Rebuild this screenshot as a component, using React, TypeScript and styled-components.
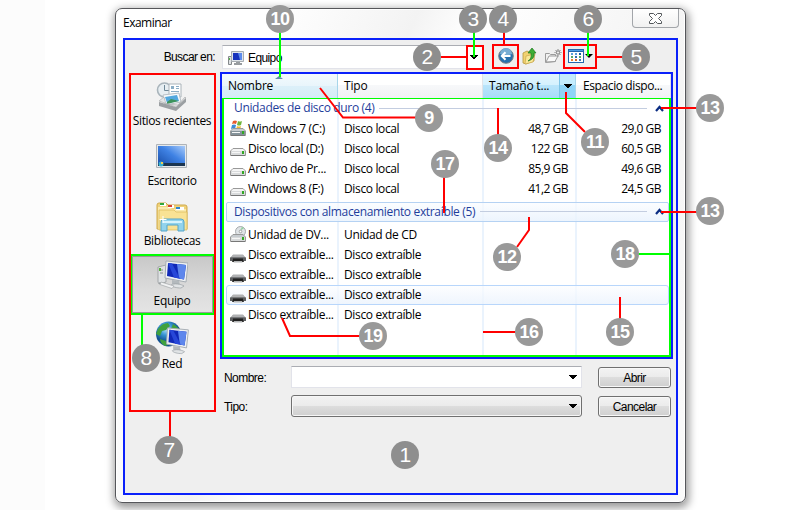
import React from "react";
import styled, { createGlobalStyle, css } from "styled-components";

const ui = '"Open Sans", "Noto Sans", sans-serif';
const classic = '"Liberation Sans", Arial, sans-serif';

const GlobalStyle = createGlobalStyle`
  * { box-sizing: border-box; }
  body { margin: 0; background: #fff; overflow: hidden; }
`;

const Page = styled.main`
  position: relative;
  width: 795px;
  height: 510px;
  padding: 8px 0 0 115px;
  overflow: hidden;
  background: linear-gradient(90deg, #fcfcfc 45px, #fff 45px);
  color: #000;
  font: 12px/20px ${ui};
  letter-spacing: -0.36px;
  white-space: nowrap;
`;

const Dialog = styled.section`
  display: flex;
  flex-direction: column;
  width: 571px;
  height: 495px;
  padding: 0 7px 7px;
  border: 1px solid #55565a;
  border-radius: 7px;
  background: linear-gradient(115deg, #fff 0 20%, #f3f3f3 38%, #fff 46%, #f4f4f4 70%, #fafafa);
  box-shadow: 1px 3px 8px 2px rgba(0, 0, 0, 0.4), inset 0 0 0 1px #fff;
`;

const TitleBar = styled.header`
  display: flex;
  flex: 0 0 29px;
  justify-content: space-between;
  line-height: 28px;
  letter-spacing: -0.5px;
`;

const CloseButton = styled.button`
  display: grid;
  place-items: center;
  width: 47px;
  height: 19px;
  margin-right: -1px;
  padding: 0;
  border: 1px solid #a3a6aa;
  border-top: 0;
  border-radius: 0 0 4px 4px;
  background: linear-gradient(#fff, #f1f1f1);
`;

const Body = styled.div`
  display: flex;
  flex: 1;
  flex-direction: column;
  width: 555px;
  padding: 5px 3px 0 4px;
  border: 2px solid #0a20fa;
  background: #efefef;
`;

const LookIn = styled.div`
  display: flex;
  flex: 0 0 28px;
  font: 12px/22px ${classic};
  letter-spacing: -0.6px;
`;

const LookLabel = styled.label`
  width: 93px;
  padding: 1px 7px 0 0;
  text-align: right;
`;

const Combo = styled.div<{ $kind: "location" | "edit" | "list" }>`
  display: flex;
  align-items: center;
  justify-content: space-between;
  width: ${(p) => (p.$kind === "location" ? 261 : 291)}px;
  height: ${(p) => (p.$kind === "location" ? 24 : 22)}px;
  padding: 1px 4px 0 5px;
  border: 1px solid #e2e3ea;
  border-top-color: #abadb3;
  background: #fff;
  ${(p) => p.$kind === "list" && css`
    border: 1px solid #707070;
    border-radius: 3px;
    box-shadow: inset 0 0 0 1px #f6f6f6;
    background: linear-gradient(#f2f2f2, #ebebeb 49%, #dddddd 50%, #cfcfcf);
  `}
`;

const Location = styled.span`
  display: flex;
  align-items: center;
  gap: 4px;
`;

const Tools = styled.div`
  display: flex;
  align-items: flex-start;
  padding: 3px 0 0 15px;
`;

const Tool = styled.span<{ $w: number }>`
  width: ${(p) => p.$w}px;
  height: 18px;
  svg { display: block; }
`;

const Columns = styled.div`
  display: flex;
  gap: 4px;
`;

const Places = styled.nav`
  width: 87px;
  height: 339px;
  border: 2px solid #f00;
  background: #f2f2f2;
`;

const Place = styled.div<{ $active?: boolean }>`
  display: flex;
  flex-direction: column;
  align-items: center;
  height: 60px;
  padding: 5px 1px 0 0;
  line-height: 18px;
  ${(p) => p.$active && css`
    margin: -1px 0 1px;
    height: 61px;
    padding-top: 4px;
    border: 1px solid #0f0;
    border-width: 2px 1px;
    box-shadow: inset 0 0 0 1px #999;
    background: linear-gradient(#c8c8c8, #dcdcdc 60%, #e4e4e4);
  `}
  svg { flex: none; }
`;

const Main = styled.div`
  width: 453px;
  margin-top: -1px;
`;

const FileList = styled.div`
  height: 287px;
  border: 2px solid #0a20fa;
  background: #fff;
`;

const ListHead = styled.div`
  display: grid;
  grid-template-columns: 116px 145px 93px 95px;
  height: 23px;
  line-height: 24px;
`;

const HeadCell = styled.div<{ $tone: "sorted" | "plain" | "hot" }>`
  display: flex;
  justify-content: space-between;
  padding-left: 6px;
  letter-spacing: -0.2px;
  border-right: 1px solid ${(p) => (p.$tone === "plain" ? "#e1e4e8" : "#a6d5ea")};
  background: ${(p) =>
    ({
      sorted: "linear-gradient(#f3fafd, #e9f5fb 48%, #dcf0f9 50%, #d5ecf7)",
      plain: "linear-gradient(#fff, #fff 44%, #f7f8fa 46%, #f1f2f4)",
      hot: "linear-gradient(#e2f6fe, #d5f1fe 44%, #b9e5fb 46%, #a8dcf8)",
    })[p.$tone]};
  &:last-child { padding-left: 7px; letter-spacing: -0.4px; }
`;

const SortMark = styled.span`
  width: 0;
  height: 0;
  margin: 2px 54px 0 0;
  border: solid transparent;
  border-width: 0 4px 3px;
  border-bottom-color: #5f8ea9;
`;

const SplitArrow = styled.span`
  display: grid;
  place-items: center;
  width: 16px;
  border-left: 1px solid #7fc4e6;
  background: linear-gradient(#c4ecfd 45%, #8fd4f7 47%);
`;

const ListBody = styled.div`
  height: 260px;
  border: 2px solid #0f0;
  background:
    linear-gradient(#eaf3fd, #eaf3fd) 113px 0 / 2px 100% no-repeat,
    linear-gradient(#eaf3fd, #eaf3fd) 258px 0 / 2px 100% no-repeat,
    linear-gradient(#eaf3fd, #eaf3fd) 351px 0 / 2px 100% no-repeat;
`;

const GroupHead = styled.div<{ $boxed?: boolean }>`
  display: flex;
  align-items: center;
  gap: 5px;
  height: ${(p) => (p.$boxed ? 20 : 19)}px;
  margin: ${(p) => (p.$boxed ? "3px 0 3px 2px" : "0 0 1px 2px")};
  padding: 0 4px 1px 7px;
  border: 1px solid transparent;
  color: #1e3d9b;
  letter-spacing: -0.34px;
  ${(p) => p.$boxed && css`
    border-color: #b5d2f3;
    border-radius: 2px;
    background: linear-gradient(rgba(250, 252, 255, 0.7), rgba(232, 242, 253, 0.8));
  `}
`;

const Rule = styled.span`
  flex: 1;
  height: 1px;
  margin-right: 3px;
  background: #c3cde0;
`;

const Row = styled.div<{ $hover?: boolean }>`
  display: grid;
  grid-template-columns: 114px 140px 84px 93px;
  height: 20px;
  margin-left: 2px;
  padding-left: 3px;
  border: 1px solid transparent;
  line-height: 18px;
  ${(p) => p.$hover && css`
    border-color: #b8d6fb;
    border-radius: 3px;
    background: linear-gradient(rgba(252, 253, 255, 0.7), rgba(235, 243, 253, 0.8));
  `}
`;

const NameCell = styled.span`
  display: flex;
  gap: 2px;
  svg { flex: none; }
`;

const Size = styled.span`
  text-align: right;
  letter-spacing: -0.5px;
`;

const Form = styled.div`
  display: grid;
  grid-template-columns: 67px 291px 73px;
  row-gap: 5px;
  margin: 7px 0 0 4px;
  font: 12px/24px ${classic};
  letter-spacing: -0.55px;
`;

const PushButton = styled.button`
  width: 73px;
  height: 21px;
  margin: 1px 0 0 16px;
  padding: 0;
  border: 1px solid #707070;
  border-radius: 3px;
  background: linear-gradient(#f3f3f3, #ebebeb 49%, #dddddd 50%, #cfcfcf);
  box-shadow: inset 0 0 0 1px #f8f8f8;
  color: #000;
  font: 12px/18px ${classic};
  letter-spacing: -0.55px;
`;

const Callouts = styled.svg`
  position: absolute;
  inset: 0;
  fill: none;
  stroke-width: 2;
`;

const Badge = styled.span<{ $x: number; $y: number; $bold?: boolean }>`
  position: absolute;
  left: ${(p) => p.$x - 14}px;
  top: ${(p) => p.$y - 14}px;
  width: 28px;
  height: 28px;
  border-radius: 50%;
  background: ${(p) => (p.$bold ? "#999" : "#8e8e8e")};
  color: #fff;
  font: ${(p) => (p.$bold ? "bold 18px/29px" : "21px/28px")} ${classic};
  letter-spacing: -0.5px;
  text-align: center;
`;

const Arrow = () => (
  <svg width="8" height="5" shapeRendering="crispEdges"><path d="M0 0h8v1H7v1H6v1H5v1H3V3H2V2H1V1H0z" /></svg>
);

const Chevron = () => (
  <svg width="9" height="7"><path d="M1 6 4.5 2 8 6" fill="none" stroke="#0b2d83" strokeWidth="2.2" /></svg>
);

const MonitorShape = () => (
  <g>
    <path d="M10 1 32 3 30 22 9 18z" fill="#eef1f3" stroke="#a6adb3" />
    <path d="M12 3 30 5 28 19.500 11 16z" fill="#1029b8" />
    <path d="M21 4 30 5 28 19.500 23 18.500z" fill="#5d86ec" />
    <path d="M12 3 16 3.500 24 18.700 18 17.500z" fill="#2747d8" />
    <path d="m16 20 7 1 1 4-8-1z" fill="#b3b9bd" />
    <path d="M15 25c3-2 10-1 13 1l-3 2c-4 0-9-1-10-3z" fill="#e1e4e6" stroke="#999fa4" strokeWidth=".7" />
  </g>
);

const RecentIcon = () => (
  <svg width="32" height="32" viewBox="0 0 32 32">
    <circle cx="8.500" cy="10" r="7" fill="#e7eef2" stroke="#a9b4bb" strokeWidth="1.600" />
    <path d="M8.500 5v5.500H13" fill="none" stroke="#6e8796" />
    <path d="M13 4h12v13H13z" fill="#fff" stroke="#aab3b9" />
    <path d="M15 6h3v3h-3zM20 6h3v1h-3zM20 8h3v1h-3zM15 11h8v1h-8z" fill="#8badc5" />
    <path d="m7 15 16-2 2 9-16 3z" fill="#f7fafc" stroke="#b8c0c6" />
    <path d="m9 17 12-2 2 6-12 2z" fill="#53a8de" /><path d="m11 22 4-3 8 2-12 3z" fill="#3c935c" />
    <path d="m3 22 17 5 10-9v4l-10 9-17-5z" fill="#9b9fa2" /><path d="m3 21 5-4 2 7 12 1 7-8 1 1-10 9z" fill="#e3e5e6" stroke="#a4a6a8" strokeWidth=".6" />
  </svg>
);

const DesktopIcon = () => (
  <svg width="32" height="32" viewBox="0 0 32 32">
    <defs><linearGradient id="desk" x1="0" y1="1" x2="1" y2="0"><stop stopColor="#174ba5" /><stop offset=".55" stopColor="#3f82e4" /><stop offset="1" stopColor="#a8cbfa" /></linearGradient></defs>
    <path d="M.5 4.500h30v23H.5z" fill="#e6e9eb" stroke="#aeb3b8" />
    <path d="M2 6h27v20H2z" fill="url(#desk)" /><path d="M2 23h27v3H2z" fill="#1b3550" />
    <circle cx="5" cy="24" r="2.500" fill="#37b0d5" /><path d="M5 22h2v2H5z" fill="#f0cc52" />
  </svg>
);

const LibraryIcon = () => (
  <svg width="32" height="32" viewBox="0 0 32 32">
    <path d="M1 5q0-2 2-2h7l2 2h17q2 0 2 2v22H1z" fill="#f0d27a" stroke="#cfaa4c" />
    <path d="M2 7h12l2 2h14v20H2z" fill="#faeaae" />
    <path d="M3 10h15l2 2h11v18H3z" fill="#f9e294" stroke="#d9b757" strokeWidth=".7" />
    <path d="M4 3h6v3H4z" fill="#fff" /><path d="M4 3h4v2H4z" fill="#2fa83b" />
    <path d="M12 5h6v3h-6z" fill="#fff" /><path d="M12 5h4v2h-4z" fill="#d84332" />
    <path d="M20 7h8v3h-8z" fill="#fff" /><path d="M20 7h4v2h-4z" fill="#2b86d1" />
    <path d="M5 31V22q0-3 3-3h17q3 0 3 3v9h-6v-6H11v6z" fill="#92d3ec" stroke="#55a5ca" />
    <path d="M7 22h19" stroke="#d7f3fc" strokeWidth="2" /><path d="M7 16v7M3.500 19.500h7" stroke="#fff" />
  </svg>
);

const ComputerIcon = () => (
  <svg width="32" height="32" viewBox="0 0 32 32">
    <path d="m2 7 8-2v17l-7 2-1-2z" fill="#dfe2e4" stroke="#95999c" strokeWidth=".8" />
    <path d="M4 10h3M4 13h3M4 22v2" stroke="#868b8e" /><path d="M3 8h2v3H3z" fill="#54ad3a" />
    <MonitorShape /><path d="m5 22 13 4-2 2.500-12-4z" fill="#f1f2f3" stroke="#a4a7aa" strokeWidth=".7" />
  </svg>
);

const NetworkIcon = () => (
  <svg width="34" height="34" viewBox="0 0 34 34">
    <defs><radialGradient id="sea" cx=".4" cy=".3"><stop stopColor="#b6e4ff" /><stop offset=".5" stopColor="#3794d2" /><stop offset="1" stopColor="#11508f" /></radialGradient></defs>
    <circle cx="13.500" cy="13" r="12.500" fill="url(#sea)" />
    <path d="M3 8q4-6 10-6l2 3-4 4-4 1-2 5-4-2zM18 3q6 3 7 8l-6 1-3-4zM5 18l6 2 2 4-3 1q-5-3-5-7z" fill="#40a13e" />
    <g transform="translate(3 6) scale(.95)"><MonitorShape /></g>
  </svg>
);

const MiniComputer = () => (
  <svg width="16" height="16" viewBox="0 0 16 16">
    <path d="M.5 6.500h3v8h-3z" fill="#dfe2e4" stroke="#85898c" /><path d="M1 8h1v2H1z" fill="#52b444" />
    <path d="M3.500 1.500h12v10h-12z" fill="#dfe4ea" stroke="#a6acb2" /><path d="M5 3h9v7H5z" fill="#1732bd" /><path d="M10 3h4v7h-2z" fill="#5d8bec" />
    <path d="M8 12h4v1h2v2H6v-2h2z" fill="#989ca0" />
  </svg>
);

type DriveKind = "system" | "disk" | "dvd" | "removable";

const DriveIcon = ({ kind }: { kind: DriveKind }) => {
  if (kind === "removable")
    return (
      <svg width="16" height="17" viewBox="0 0 16 17">
        <path d="M3 9h10l3 3v3H0v-3z" fill="#909294" /><path d="M3 8.500h10l1.500 2.500h-13z" fill="#b0b1b3" />
        <path d="M0 11.500h16v3.500H0z" fill="#5e6062" /><path d="M3 12.500h10v1l1 2.500H2l1-2.500z" fill="#222" /><path d="M4 15h8l.5 1.500h-9z" fill="#b4b6b7" />
      </svg>
    );
  return (
    <svg width="16" height="17" viewBox="0 0 16 17">
      {kind === "system" && (
        <g><path d="M3 1q2-1 4 0L6 4q-2-1-4 0z" fill="#e75a2c" /><path d="M8 1q2 1 4 0l-1 4q-2 1-4 0z" fill="#6fb53c" /><path d="M2 5q2-1 4 0L5 9q-2-1-4 0z" fill="#3b8bd8" /><path d="M7 6q2 1 4 0l-1 4q-2 1-4 0z" fill="#f3bc2f" /></g>
      )}
      {kind === "dvd" && (
        <g><circle cx="10.500" cy="5.500" r="5" fill="#dfe3e6" stroke="#94999d" strokeWidth=".8" /><path d="m10 5 2-4 2 1z" fill="#90d39c" /><circle cx="10.500" cy="5.500" r="1.300" fill="#fff" stroke="#888" strokeWidth=".7" /></g>
      )}
      <path d="M3 8.500h10l2.500 2.500v4.500H.5V11z" fill={kind === "disk" ? "#f5f5f5" : "#c7ccd0"} stroke="#999" />
      <path d="M1 11h14v4H1z" fill={kind === "system" ? "#85939a" : "#d8dadb"} />
      <path d="M2 12h8v1H2z" fill="#f6f6f6" /><path d="M12 11h2v3h-2z" fill="#32a824" />
      <path d="M1 15.500h14" stroke="#777" />
    </svg>
  );
};

const BackIcon = () => (
  <svg width="16" height="16" viewBox="0 0 16 16">
    <circle cx="8" cy="8" r="7.300" fill="#2670ad" stroke="#777f87" />
    <path d="M2 6a6 6 0 0 1 12 0q-6 3-12 0z" fill="#78add3" />
    <path d="M12.500 8H4M7.500 4.200 3.800 8l3.700 3.800" stroke="#fff" strokeWidth="2" fill="none" />
  </svg>
);

const UpIcon = () => (
  <svg width="15" height="17" viewBox="0 0 15 17">
    <path d="M1 5 5 3l2 1 5-1v10l-8 3-3-1z" fill="#f2d271" stroke="#b6973e" strokeWidth=".8" />
    <path d="m4 8 9-2-2 8-8 2z" fill="#fae898" stroke="#c9a64b" strokeWidth=".7" />
    <path d="M6 13q4-2 3-8H6l4-5 4 5h-2q1 6-6 8z" fill="#3dae35" stroke="#1e7923" strokeWidth=".7" />
  </svg>
);

const NewFolderIcon = () => (
  <svg width="17" height="16" viewBox="0 0 17 16" fill="none" stroke="#9b9b9b">
    <path d="M.5 5.500h4l1 1h5v7l-10 1z" fill="#f1f1f1" /><path d="m1 14 3-6h9l-3 5.500z" fill="#fafafa" />
    <circle cx="13" cy="4.500" r="1.700" fill="#eee" stroke="#777" /><path d="M13 1v1M13 7v1.500M9.500 4.500h1M15.500 4.500h1M10.500 2l1 1M14.500 6l1 1M15.500 2l-1 1" stroke="#888" />
  </svg>
);

const ViewIcon = () => (
  <svg width="16" height="15" viewBox="0 0 16 15" shapeRendering="crispEdges">
    <path d="M0 1h16v14H0z" fill="#2367ae" /><path d="M1 2h14v1H1z" fill="#4e9ee3" /><path d="M1 4h14v10H1z" fill="#fff" />
    <path d="M3 5h2v2H3zM7 5h2v2H7z" fill="#5c9fd9" /><path d="M11 5h2v2h-2z" fill="#175aa5" />
    <path d="M3 8h2v2H3zM11 8h2v2h-2z" fill="#58a965" /><path d="M7 8h2v2H7z" fill="#316cb3" />
    <path d="M3 11h2v2H3z" fill="#e68237" /><path d="M7 11h2v2H7z" fill="#d26a2e" /><path d="M11 11h2v2h-2z" fill="#4878b5" />
  </svg>
);

type Entry = { name: string; type: string; kind: DriveKind; total?: string; free?: string; hover?: boolean };

const disks: Entry[] = [
  { name: "Windows 7 (C:)", type: "Disco local", kind: "system", total: "48,7 GB", free: "29,0 GB" },
  { name: "Disco local (D:)", type: "Disco local", kind: "disk", total: "122 GB", free: "60,5 GB" },
  { name: "Archivo de Pr...", type: "Disco local", kind: "disk", total: "85,9 GB", free: "49,6 GB" },
  { name: "Windows 8 (F:)", type: "Disco local", kind: "disk", total: "41,2 GB", free: "24,5 GB" },
];

const devices: Entry[] = [
  { name: "Unidad de DV...", type: "Unidad de CD", kind: "dvd" },
  { name: "Disco extraíble...", type: "Disco extraíble", kind: "removable" },
  { name: "Disco extraíble...", type: "Disco extraíble", kind: "removable" },
  { name: "Disco extraíble...", type: "Disco extraíble", kind: "removable", hover: true },
  { name: "Disco extraíble...", type: "Disco extraíble", kind: "removable" },
];

const DriveRow = ({ item }: { item: Entry }) => (
  <Row $hover={item.hover}>
    <NameCell><DriveIcon kind={item.kind} />{item.name}</NameCell>
    <span>{item.type}</span>
    <Size>{item.total}</Size>
    <Size>{item.free}</Size>
  </Row>
);

const badges: [number, number, number, boolean][] = [
  [1, 405, 455, false], [2, 427, 57, false], [3, 473, 19, false], [4, 503, 19, false],
  [5, 636, 57, false], [6, 588, 19, false], [7, 169, 450, false], [8, 146, 358, false],
  [9, 429, 118, true], [10, 280, 19, true], [11, 595, 142, true], [12, 507, 257, true],
  [13, 710, 108, true], [13, 710, 211, true], [14, 498, 148, true], [15, 620, 332, true],
  [16, 529, 332, true], [17, 445, 164, true], [18, 625, 254, true], [19, 373, 336, true],
];

export default function App() {
  return (
    <Page>
      <GlobalStyle />
      <Dialog>
        <TitleBar>
          Examinar
          <CloseButton aria-label="Cerrar">
            <svg width="13" height="11" viewBox="0 0 13 11"><path d="M.5.5h4l2 2 2-2h4v2l-3 3 3 3v2h-4l-2-2-2 2h-4v-2l3-3-3-3z" fill="#fff" stroke="#54585c" /></svg>
          </CloseButton>
        </TitleBar>
        <Body>
          <LookIn>
            <LookLabel>Buscar en:</LookLabel>
            <Combo $kind="location"><Location><MiniComputer />Equipo</Location><Arrow /></Combo>
            <Tools>
              <Tool $w={24}><BackIcon /></Tool>
              <Tool $w={23}><UpIcon /></Tool>
              <Tool $w={23}><NewFolderIcon /></Tool>
              <Tool $w={17}><ViewIcon /></Tool>
              <Tool $w={8}><svg width="8" height="11"><path d="M0 6h8L4 10z" /></svg></Tool>
            </Tools>
          </LookIn>
          <Columns>
            <Places>
              <Place><RecentIcon />Sitios recientes</Place>
              <Place><DesktopIcon />Escritorio</Place>
              <Place><LibraryIcon />Bibliotecas</Place>
              <Place $active><ComputerIcon />Equipo</Place>
              <Place><NetworkIcon />Red</Place>
            </Places>
            <Main>
              <FileList>
                <ListHead>
                  <HeadCell $tone="sorted">Nombre<SortMark /></HeadCell>
                  <HeadCell $tone="plain">Tipo</HeadCell>
                  <HeadCell $tone="hot">Tamaño t...<SplitArrow><Arrow /></SplitArrow></HeadCell>
                  <HeadCell $tone="plain">Espacio dispo...</HeadCell>
                </ListHead>
                <ListBody>
                  <GroupHead>Unidades de disco duro (4)<Rule /><Chevron /></GroupHead>
                  {disks.map((d, i) => <DriveRow key={i} item={d} />)}
                  <GroupHead $boxed>Dispositivos con almacenamiento extraíble (5)<Rule /><Chevron /></GroupHead>
                  {devices.map((d, i) => <DriveRow key={i} item={d} />)}
                </ListBody>
              </FileList>
              <Form>
                <span>Nombre:</span><Combo $kind="edit"><span /><Arrow /></Combo><PushButton>Abrir</PushButton>
                <span>Tipo:</span><Combo $kind="list"><span /><Arrow /></Combo><PushButton>Cancelar</PushButton>
              </Form>
            </Main>
          </Columns>
        </Body>
      </Dialog>
      <Callouts width="795" height="510">
        <g stroke="#f00">
          <path d="M467 46h16v23h-16zM493 45h25v23h-25zM564 45h32v23h-32z" />
          <path d="M441 57h25M504 32v12M597 57h26M320 88l23 29.500h73M498 108v27M566 92v21l19 19M661 108h36M661 212h36M444 177v36M529 217v13l-12 17M620 297v22M483 332h33M282 318l8 18h70M170 412v26" />
        </g>
        <path stroke="#0f0" d="M280 32v45M474 32v25M588 32v24M638 254h31M142 314v32" />
      </Callouts>
      {badges.map(([n, x, y, bold], i) => <Badge key={i} $x={x} $y={y} $bold={bold}>{n}</Badge>)}
    </Page>
  );
}
